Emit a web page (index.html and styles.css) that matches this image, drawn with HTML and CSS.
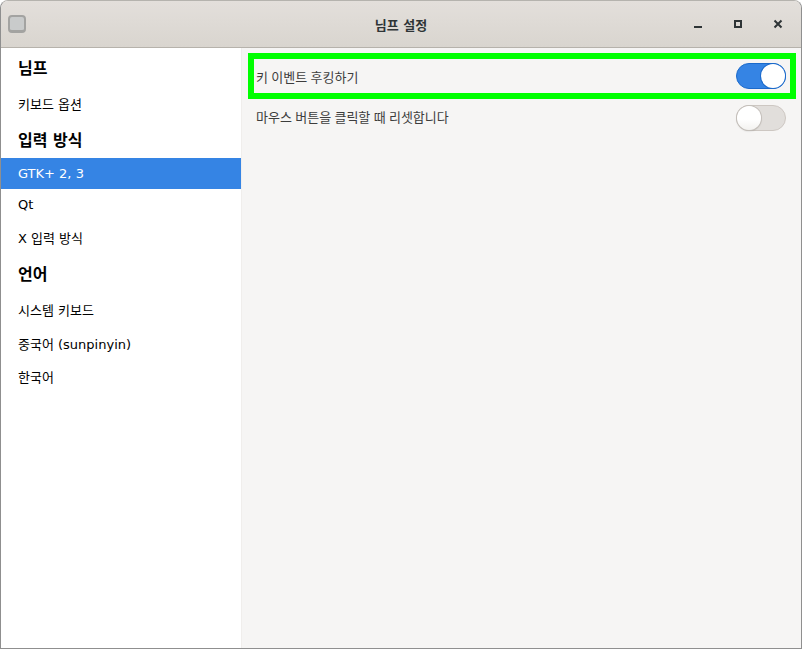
FILE: index.html
```html
<!DOCTYPE html>
<html lang="ko">
<head>
<meta charset="utf-8">
<title>님프 설정</title>
<link rel="stylesheet" href="styles.css">
</head>
<body>
<div class="window">
  <header class="titlebar">
    <div class="app-icon"></div>
    <div class="title">님프 설정</div>
    <div class="controls">
      <svg class="ctl" width="16" height="16" viewBox="0 0 16 16"><rect x="4" y="10" width="8" height="2" fill="#2e3436"/></svg>
      <svg class="ctl" width="16" height="16" viewBox="0 0 16 16"><path fill-rule="evenodd" d="M4 4h8v8H4zM6 6v4h4V6z" fill="#2e3436"/></svg>
      <svg class="ctl" width="16" height="16" viewBox="0 0 16 16"><path d="M4.5 4.5l7 7M11.5 4.5l-7 7" stroke="#2e3436" stroke-width="2" fill="none"/></svg>
    </div>
  </header>
  <div class="body">
    <nav class="sidebar">
      <div class="item head">님프</div>
      <div class="item">키보드 옵션</div>
      <div class="item head">입력 방식</div>
      <div class="item short selected">GTK+ 2, 3</div>
      <div class="item qt">Qt</div>
      <div class="item">X 입력 방식</div>
      <div class="item head">언어</div>
      <div class="item">시스템 키보드</div>
      <div class="item mid">중국어 (sunpinyin)</div>
      <div class="item mid">한국어</div>
    </nav>
    <main class="content">
      <div class="row highlighted">
        <span class="label">키 이벤트 후킹하기</span>
        <span class="switch on"><span class="knob"></span></span>
      </div>
      <div class="row">
        <span class="label">마우스 버튼을 클릭할 때 리셋합니다</span>
        <span class="switch"><span class="knob"></span></span>
      </div>
    </main>
  </div>
</div>
</body>
</html>
```
FILE: styles.css
```css
* { box-sizing: border-box; }
html, body { margin: 0; height: 100%; }
body {
  background: #fff;
  font-family: "DejaVu Sans", "Noto Sans CJK KR", sans-serif;
  font-size: 13px;
  color: #2e3436;
}
.window {
  width: 802px;
  height: 649px;
  display: flex;
  flex-direction: column;
  border: 1px solid #8f8f8f;
  border-top-color: #b5b3ae;
  border-radius: 8px 8px 0 0;
  overflow: hidden;
  background: #f6f5f4;
}
.titlebar {
  height: 47px;
  flex: none;
  display: flex;
  align-items: center;
  padding: 0 15px 0 7px;
  background: linear-gradient(#e3dfdb, #d9d5cf);
  border-bottom: 1px solid #b6b2ab;
}
.app-icon {
  width: 18px;
  height: 18px;
  border-radius: 4px;
  background: #c9cbcb;
  border: 2px solid #a3a3a1;
  border-bottom-width: 3px;
}
.title {
  flex: 1;
  text-align: center;
  font-size: 13px;
  font-weight: 700;
  color: #2e3436;
  padding-left: 86px;
}
.controls { display: flex; gap: 24px; }
.ctl { display: block; }
.body { flex: 1; display: flex; min-height: 0; }
.sidebar {
  width: 240px;
  flex: none;
  background: #fff;
  color: #000;
  padding-top: 1px;
}
.item {
  height: 36px;
  padding-left: 17px;
  display: flex;
  align-items: center;
}
.item.short { height: 31px; }
.item.qt { height: 30px; }
.item.mid { height: 33px; }
.item.head { font-size: 16px; font-weight: 700; }
.item.selected { background: #3584e4; color: #fff; margin-top: 1px; }
.content {
  flex: 1;
  padding: 5px 5px 0 6px;
  border-left: 1px solid #f0eeec;
}
.row {
  height: 46px;
  display: flex;
  align-items: center;
  justify-content: space-between;
  padding: 0 10px 0 8px;
  color: #3d3d3d;
}
.row + .row { margin-top: -3px; height: 41px; }
.row + .row .switch { margin-top: 2px; }
.label { word-spacing: -0.8px; }
.row.highlighted {
  border: 6px solid #00ff00;
  height: 46px;
  padding: 0 4px 0 2px;
}
.switch {
  width: 50px;
  height: 26px;
  border-radius: 13px;
  background: #e1dedb;
  border: 1px solid #cdc7c2;
  display: flex;
  justify-content: flex-start;
}
.switch.on {
  background: #3584e4;
  border-color: #1b6acb;
  justify-content: flex-end;
}
.knob {
  width: 24px;
  height: 24px;
  border-radius: 50%;
  background: linear-gradient(#fff 55%, #f3f2f0);
  box-shadow: 0 0 0 1px #c4bfba, 0 1px 2px rgba(0,0,0,.2);
}
.switch.on .knob { box-shadow: 0 0 0 1px #1b6acb; background: #fff; }
```
